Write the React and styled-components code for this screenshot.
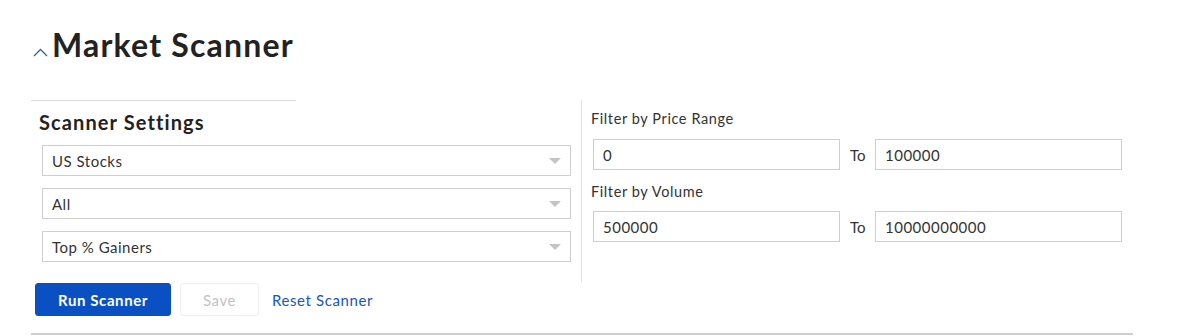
import React from "react";
import styled, { createGlobalStyle } from "styled-components";

const Global = createGlobalStyle`
  html, body { margin: 0; padding: 0; background: #fff; }
  body { font-family: Lato, "Open Sans", Arial, sans-serif; color: #333; }
  * { box-sizing: border-box; }
`;

const Page = styled.div`
  width: 1184px;
  height: 336px;
  padding: 0 0 0 31px;
  overflow: hidden;
`;

const Header = styled.div`
  display: flex;
  align-items: flex-end;
  height: 62px;
  padding-top: 28px;
`;

const Caret = styled.svg`
  width: 15px;
  height: 9px;
  margin: 0 4px 5px 2px;
  flex: none;
`;

const Title = styled.h1`
  margin: 0;
  font-size: 32px;
  font-weight: 700;
  line-height: 34px;
  color: #222;
  letter-spacing: 1.2px;
`;

const Main = styled.div`
  display: flex;
  margin-top: 38px;
`;

const LeftCol = styled.div`
  width: 551px;
  border-right: 1px solid #e3e3e3;
  height: 182px;
`;

const Rule = styled.div`
  width: ${(p) => p.$w}px;
  border-top: 1px solid #dcdcdc;
`;

const SectionTitle = styled.h2`
  margin: 9px 0 11px 8px;
  font-size: 20px;
  font-weight: 700;
  line-height: 24px;
  color: #222;
  letter-spacing: 1.1px;
`;

const Selects = styled.div`
  display: flex;
  flex-direction: column;
  gap: 12px;
  margin-left: 11px;
  width: 529px;
`;

const SelectBox = styled.div`
  display: flex;
  align-items: center;
  justify-content: space-between;
  height: 31px;
  border: 1px solid #cfcfcf;
  padding: 0 9px;
  font-size: 15px;
  letter-spacing: 0.5px;
  color: #333;
`;

const Arrow = styled.span`
  width: 0;
  height: 0;
  border-left: 6px solid transparent;
  border-right: 6px solid transparent;
  border-top: 6px solid #c4c4c4;
`;

const RightCol = styled.div`
  padding: 10px 0 0 9px;
  display: flex;
  flex-direction: column;
`;

const Label = styled.div`
  font-size: 14.5px;
  line-height: 18px;
  letter-spacing: 0.6px;
  color: #333;
  margin-bottom: ${(p) => p.$mb}px;
`;

const RangeRow = styled.div`
  display: flex;
  align-items: center;
  margin-left: 2px;
  margin-bottom: ${(p) => p.$mb}px;
`;

const Input = styled.div`
  width: 247px;
  height: 31px;
  border: 1px solid #cfcfcf;
  display: flex;
  align-items: center;
  padding: 0 9px;
  font-size: 15px;
  letter-spacing: 0.5px;
  color: #333;
`;

const To = styled.span`
  width: 35px;
  padding-left: 10px;
  font-size: 15px;
  color: #333;
`;

const Buttons = styled.div`
  display: flex;
  align-items: center;
  gap: 9px;
  margin: 1px 0 0 4px;
  height: 33px;
`;

const Button = styled.button`
  height: 33px;
  border-radius: 3px;
  font-family: inherit;
  font-size: 15px;
  letter-spacing: 0.6px;
  padding: 0;
  width: ${(p) => p.$w}px;
  background: ${(p) => (p.$primary ? "#0a50c2" : "#fff")};
  color: ${(p) => (p.$primary ? "#fff" : "#c2c2c2")};
  border: 1px solid ${(p) => (p.$primary ? "#0a50c2" : "#efefef")};
  font-weight: ${(p) => (p.$primary ? 700 : 400)};
`;

const LinkButton = styled.a`
  margin-left: 4px;
  font-size: 15px;
  letter-spacing: 0.6px;
  color: #1656c2;
  text-decoration: none;
`;

const Bottom = styled.div`
  margin-top: 17px;
  width: 1102px;
  border-top: 2px solid #cfcfcf;
`;

export default function App() {
  return (
    <Page>
      <Global />
      <Header>
        <Caret viewBox="0 0 15 9">
          <path d="M1 8 L7.5 1.5 L14 8" fill="none" stroke="#3b5f9e" strokeWidth="1.3" />
        </Caret>
        <Title>Market Scanner</Title>
      </Header>
      <Main>
        <LeftCol>
          <Rule $w={265} />
          <SectionTitle>Scanner Settings</SectionTitle>
          <Selects>
            {["US Stocks", "All", "Top % Gainers"].map((v) => (
              <SelectBox key={v}>
                {v}
                <Arrow />
              </SelectBox>
            ))}
          </Selects>
        </LeftCol>
        <RightCol>
          <Label $mb={11}>Filter by Price Range</Label>
          <RangeRow $mb={13}>
            <Input>0</Input>
            <To>To</To>
            <Input>100000</Input>
          </RangeRow>
          <Label $mb={10}>Filter by Volume</Label>
          <RangeRow $mb={0}>
            <Input>500000</Input>
            <To>To</To>
            <Input>10000000000</Input>
          </RangeRow>
        </RightCol>
      </Main>
      <Buttons>
        <Button $primary $w={136}>Run Scanner</Button>
        <Button $w={79}>Save</Button>
        <LinkButton>Reset Scanner</LinkButton>
      </Buttons>
      <Bottom />
    </Page>
  );
}
